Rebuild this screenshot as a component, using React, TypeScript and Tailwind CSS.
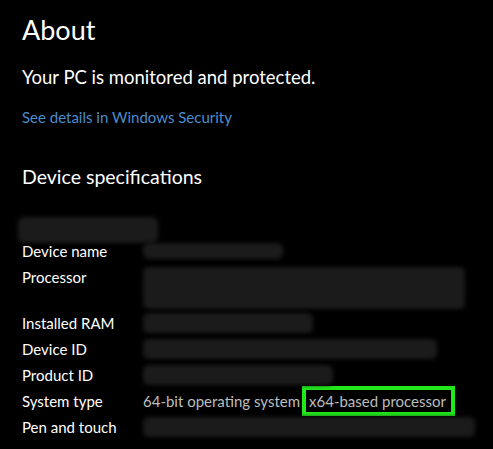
import React from "react";

const Blur = ({ w, h, className = "" }: { w: number; h: number; className?: string }) => (
  <div
    className={`rounded-[6px] bg-[#1b1b1b] blur-[2px] ${className}`}
    style={{ width: w, height: h }}
  />
);

const rows: { label: string; h: number; value: React.ReactNode }[] = [
  { label: "Device name", h: 26, value: <Blur w={140} h={16} /> },
  { label: "Processor", h: 46, value: <Blur w={322} h={42} className="mt-[3px]" /> },
  { label: "Installed RAM", h: 26, value: <Blur w={170} h={20} /> },
  { label: "Device ID", h: 26, value: <Blur w={294} h={20} /> },
  { label: "Product ID", h: 26, value: <Blur w={190} h={20} /> },
  {
    label: "System type",
    h: 26,
    value: (
      <div className="flex items-center text-[#bdbdbd]">
        <span>64-bit operating system</span>
        <span className="-my-[2px] ml-[2px] border-[4px] border-[#21e81a] pl-[3px] pr-[5px] leading-[22px]">x64-based processor</span>
      </div>
    ),
  },
  { label: "Pen and touch", h: 26, value: <Blur w={332} h={20} /> },
];

export default function App() {
  return (
    <div
      className="h-[449px] w-[493px] overflow-hidden bg-black pl-[22px] pt-[10px] text-white"
      style={{ fontFamily: 'Lato, "Noto Sans", sans-serif' }}
    >
      <h1 className="text-[27px] leading-[40px] font-normal">About</h1>
      <p className="mt-[13px] text-[18.5px] leading-[28px]">Your PC is monitored and protected.</p>
      <p className="mt-[16px] text-[15px] leading-[20px] text-[#4c8ccb]">See details in Windows Security</p>
      <h2 className="mt-[36px] text-[19.5px] leading-[28px]">Device specifications</h2>
      <Blur w={140} h={26} className="mt-[26px] -mb-[5px] -ml-[4px]" />
      <div className="grid grid-cols-[121px_1fr] text-[15px]">
        {rows.map((r) => (
          <React.Fragment key={r.label}>
            <div className="flex items-start leading-[26px]" style={{ height: r.h }}>
              {r.label}
            </div>
            <div className="flex items-start leading-[26px]" style={{ height: r.h }}>
              <div className="flex min-h-[26px] items-center">{r.value}</div>
            </div>
          </React.Fragment>
        ))}
      </div>
    </div>
  );
}
